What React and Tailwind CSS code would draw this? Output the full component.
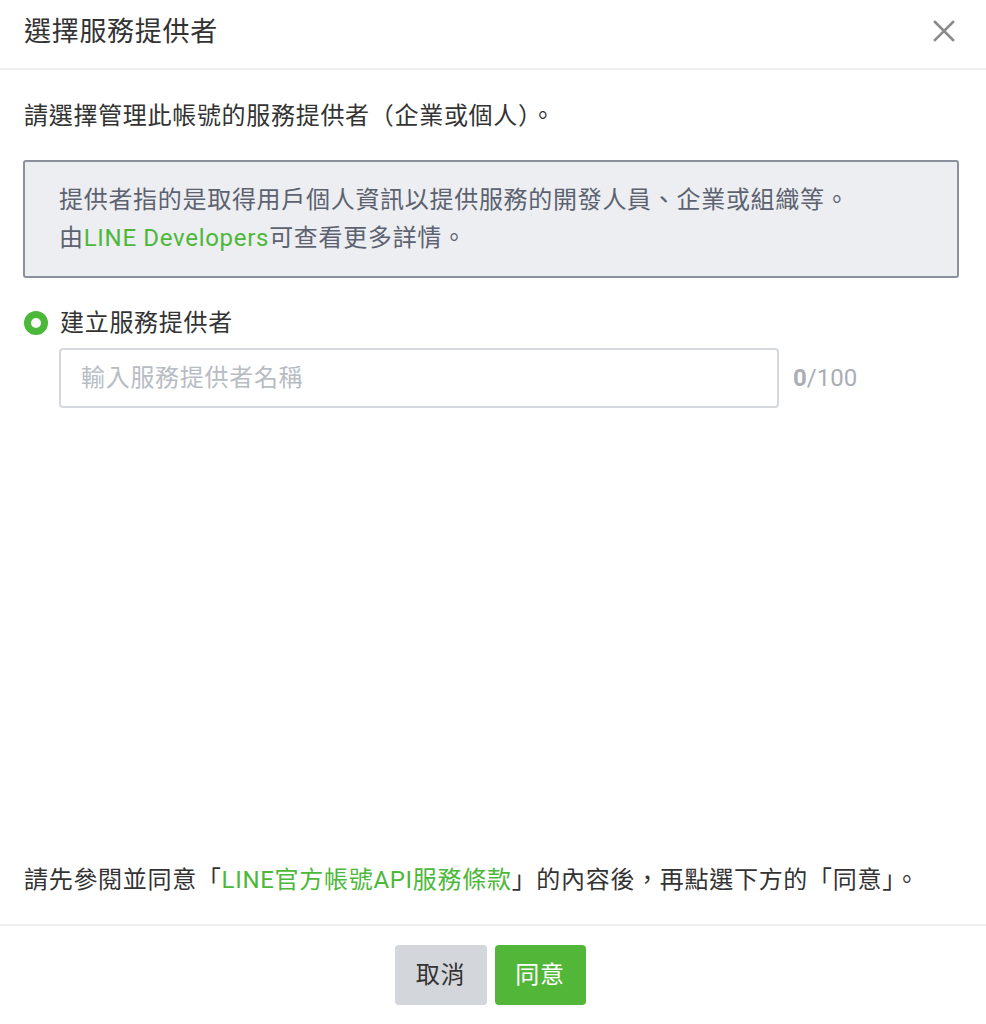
import React, { useState } from 'react';

const App = () => {
  const [name, setName] = useState('');

  return (
    <div
      className="w-[986px] h-[1024px] bg-white flex flex-col text-[#333333] tracking-[0.7px]"
      style={{ fontFamily: 'Roboto, "Noto Sans CJK TC", sans-serif' }}
    >
      <div className="h-[70px] shrink-0 flex items-center justify-between pl-6 pr-[30px] border-b-2 border-[#eeeff1]">
        <h1 className="text-[27px] leading-none pb-1">選擇服務提供者</h1>
        <button className="w-6 h-6 mb-[6px] flex items-center justify-center" aria-label="close">
          <svg width="24" height="24" viewBox="0 0 24 24" fill="none" stroke="#8a8a8a" strokeWidth="2.6" strokeLinecap="square">
            <path d="M3 3 L21 21 M21 3 L3 21" />
          </svg>
        </button>
      </div>

      <div className="flex-1 flex flex-col px-6">
        <p className="text-[24px] leading-none mt-[34px]">請選擇管理此帳號的服務提供者（企業或個人）。</p>

        <div className="mt-[32px] mr-[3px] -ml-px bg-[#eceef1] border-2 border-[#8b909c] rounded-[3px] px-[34px] pt-[19px] pb-[19px] text-[24px] leading-[38px] text-[#5c6270]">
          <p>提供者指的是取得用戶個人資訊以提供服務的開發人員、企業或組織等。</p>
          <p>
            由<span className="text-[#4cb83a]">LINE Developers</span>可查看更多詳情。
          </p>
        </div>

        <div className="mt-[33px] flex items-center gap-3">
          <span className="w-6 h-6 rounded-full border-[7px] border-[#4cb83a] bg-white"></span>
          <span className="text-[24px] leading-none">建立服務提供者</span>
        </div>

        <div className="mt-[13px] ml-[35px] flex items-center gap-[14px]">
          <input
            value={name}
            onChange={(e) => setName(e.target.value.slice(0, 100))}
            placeholder="輸入服務提供者名稱"
            className="w-[720px] h-[60px] border-2 border-[#d5d8dc] rounded-[4px] px-5 text-[24px] tracking-[0.7px] placeholder:text-[#b8bcc3] outline-none"
          />
          <span className="text-[24px] tracking-normal text-[#a9adb5]">
            <b className="font-bold">{name.length}</b>/100
          </span>
        </div>

        <div className="flex-1"></div>

        <p className="text-[24px] leading-none mb-[32px]">
          請先參閱並同意「<span className="text-[#4cb83a]">LINE官方帳號API服務條款</span>」的內容後，再點選下方的「同意」。
        </p>
      </div>

      <div className="h-[100px] shrink-0 border-t-2 border-[#eeeff1] flex items-start justify-center gap-2 pt-[19px] pr-[6px]">
        <button className="w-[92px] h-[60px] rounded-[4px] bg-[#d3d6da] text-[24px] text-[#333333]">取消</button>
        <button className="w-[91px] h-[60px] rounded-[4px] bg-[#52b739] text-[24px] text-white">同意</button>
      </div>
    </div>
  );
};

export default App;
